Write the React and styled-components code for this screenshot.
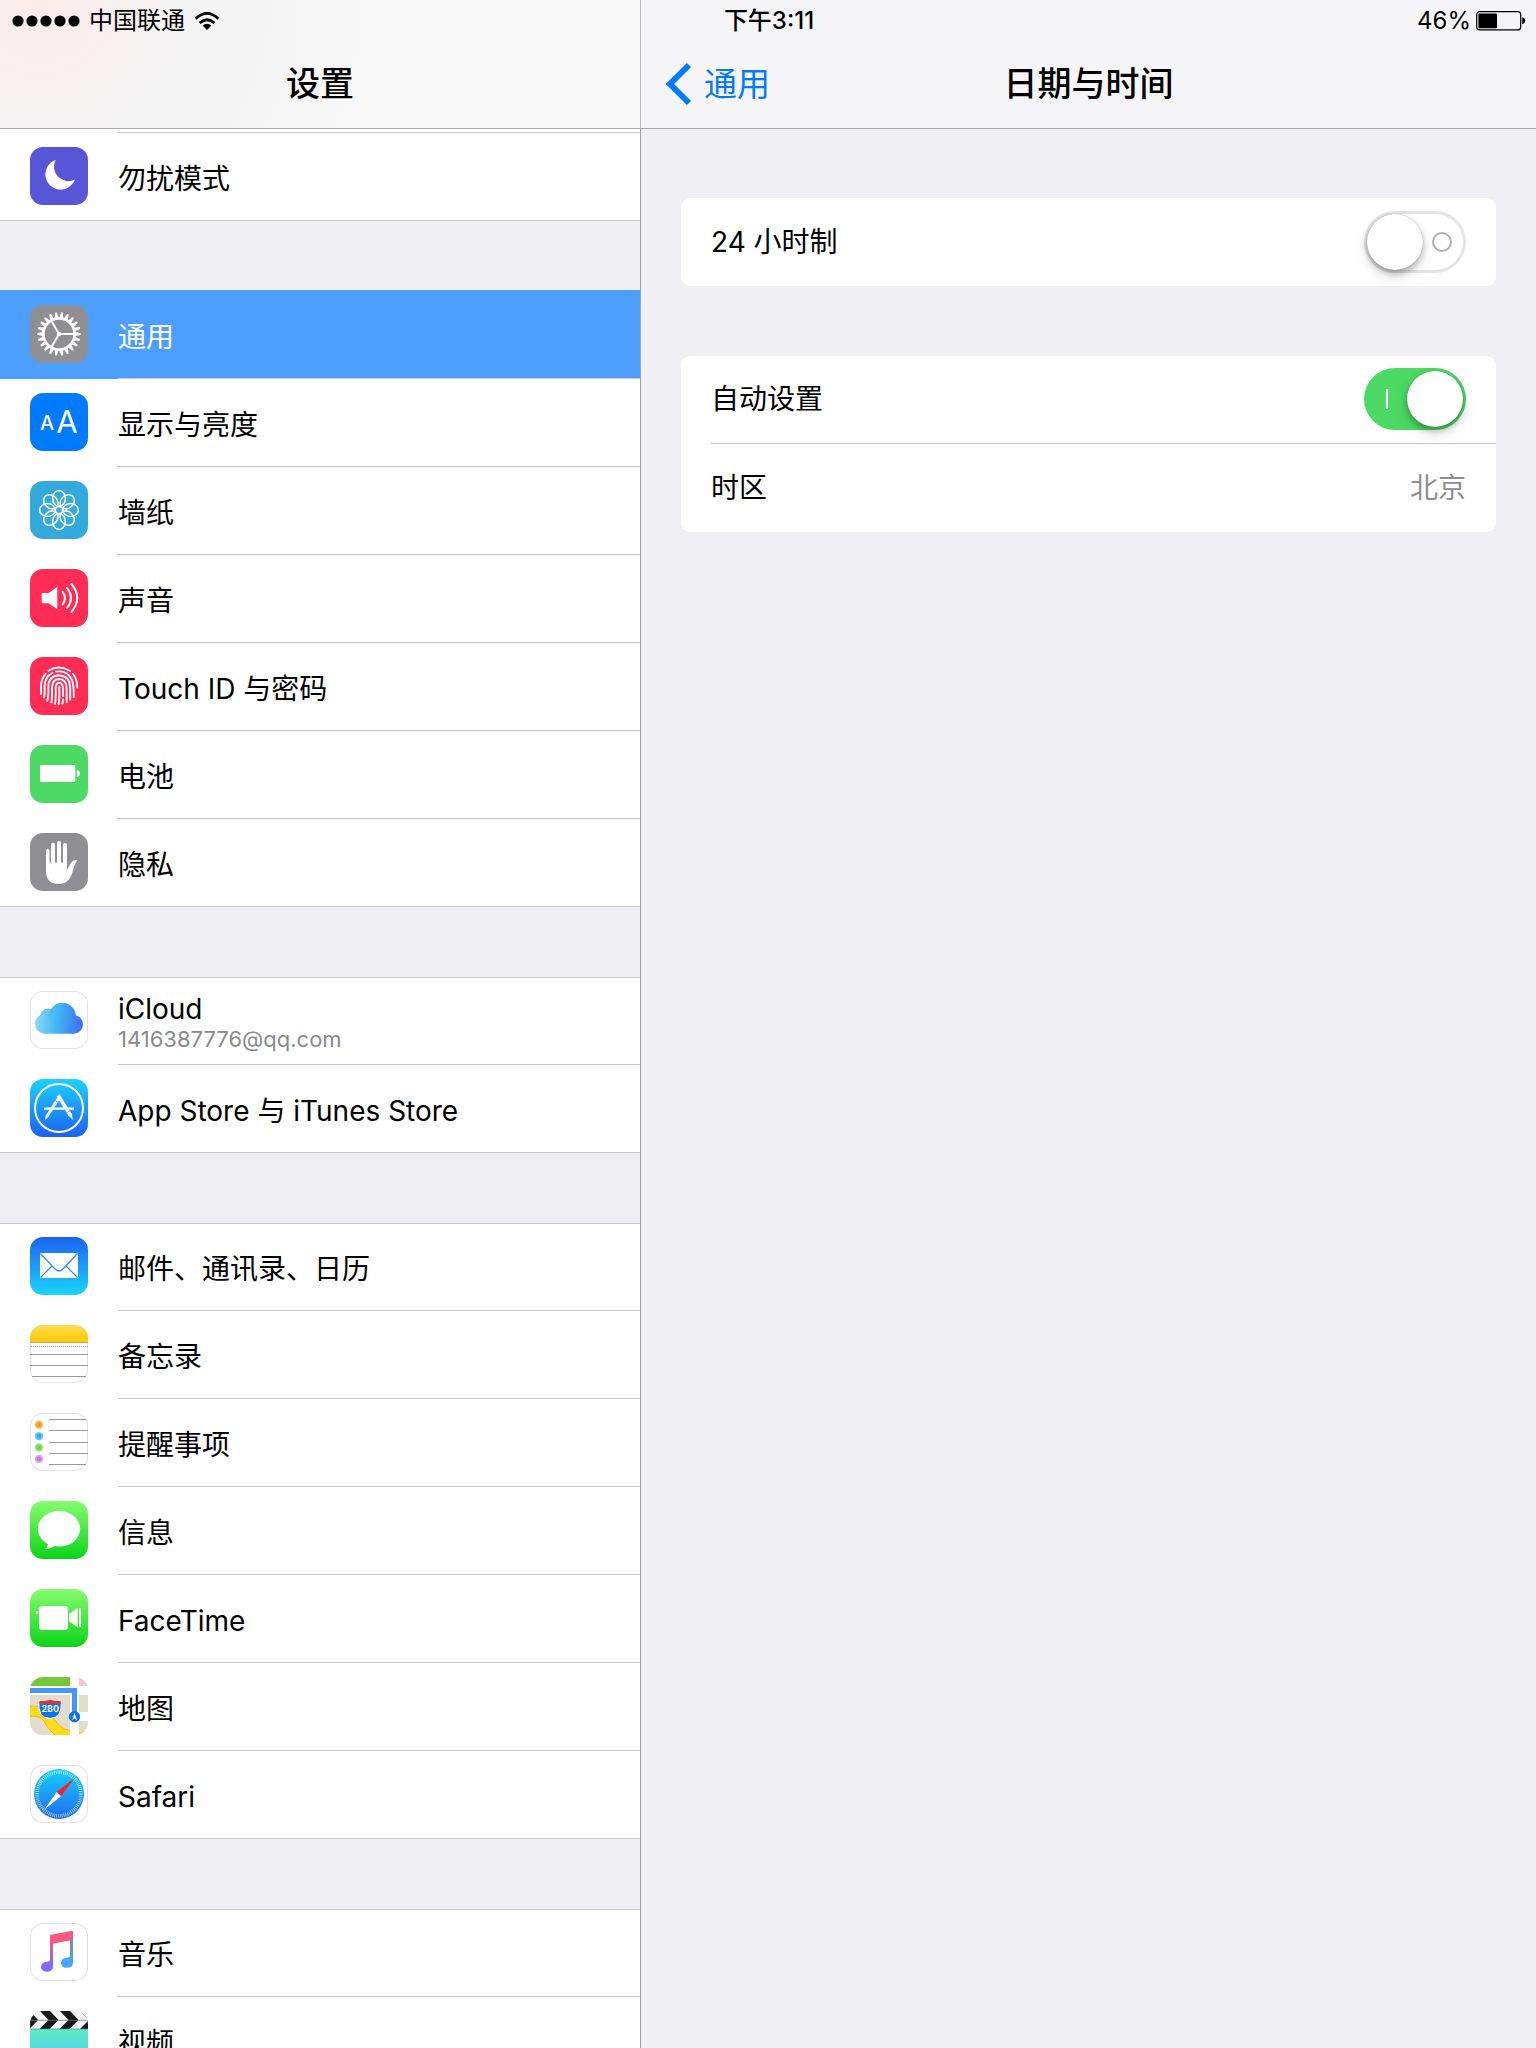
import React, { useState } from "react";
import styled, { createGlobalStyle, css } from "styled-components";

const GlobalStyle = createGlobalStyle`
    *, *::before, *::after{
        box-sizing: border-box;
    }
    body{
        margin: 0;
        background: #efeff4;
        color: #000;
        font-family: Inter, "Noto Sans CJK SC", sans-serif;
    }
    ul{
        list-style: none;
        margin: 0;
        padding: 0;
    }
    a{
        text-decoration: none;
        color: inherit;
    }
`

const Page = styled.div`
    display: grid;
    grid-template-columns: minmax(0, 5fr) minmax(0, 7fr);
    grid-template-rows: auto minmax(0, 1fr);
    height: 100vh;
`

// shares the first grid row with the two nav bars
const StatusBar = styled.div`
    grid-row: 1;
    grid-column: 1 / 3;
    align-self: start;
    z-index: 1;
    display: grid;
    grid-template-columns: 1fr auto 1fr;
    align-items: center;
    height: 42px;
    padding: 0 10px 0 12px;
    font-size: 24px;
    line-height: 42px;
`

const StatusGroup = styled.div`
    display: flex;
    align-items: center;
    justify-content: ${(props) => (props.$end ? "flex-end" : "flex-start")};
    gap: ${(props) => (props.$end ? 5 : 9)}px;
`

const Time = styled.div`
    font-weight: 500;
`

const NavBar = styled.header`
    grid-row: 1;
    grid-column: ${(props) => props.$column};
    display: grid;
    grid-template-columns: 1fr auto 1fr;
    align-items: center;
    height: 129px;
    padding: 40px 25px 0;
    border-bottom: 1px solid #a7a7ac;
    background: ${(props) => props.$background};
    ${(props) => props.$divided && css`
        border-left: 1px solid #b9b9bc;
    `}
`

const Title = styled.h1`
    grid-column: 2;
    margin: 0;
    font-size: 34px;
    line-height: 88px;
    font-weight: 500;
`

const BackLink = styled.a`
    grid-column: 1;
    display: flex;
    align-items: center;
    gap: 12px;
    font-size: 33px;
    line-height: 88px;
    color: #007aff;
`

const Sidebar = styled.nav`
    grid-row: 2;
    grid-column: 1;
    overflow-y: auto;
    scrollbar-width: none;
`

const Group = styled.ul`
    margin-bottom: 70px;
    background: #fff;
    & + &{
        box-shadow: inset 0 1px #c8c7cc;
    }
`

const Separator = styled.div`
    height: 4px;
    padding-left: 118px;
    background: #fff;
    &::after{
        content: "";
        display: block;
        height: 4px;
        border-bottom: 1px solid #c8c7cc;
    }
`

const Row = styled.a`
    display: flex;
    height: 88px;
    padding-left: 30px;
    gap: 30px;
    ${(props) => props.$selected && css`
        color: #fff;
        background: #4c9fff;
        box-shadow: 0 -1px #4c9fff;
    `}
    li:last-child > &{
        border-bottom: 1px solid #c8c7cc;
    }
`

const RowText = styled.div`
    flex: 1;
    display: flex;
    flex-direction: column;
    justify-content: center;
    padding-top: ${(props) => (props.$double ? 2 : 4)}px;
    border-bottom: 1px solid #c8c7cc;
    li:last-child &{
        border-bottom: 0;
    }
`

const Label = styled.span`
    font-size: 28px;
    line-height: 34px;
`

const SubLabel = styled.span`
    font-size: 22px;
    line-height: 26px;
    color: #8a8a8a;
`

const Icon = styled.svg`
    flex: none;
    display: block;
    width: 58px;
    height: 58px;
    margin-top: 14px;
    border-radius: 13px;
    background: ${(props) => props.$color || "#fff"};
    ${(props) => props.$outlined && css`
        box-shadow: inset 0 0 0 1px #e2e2e5;
    `}
`

const Detail = styled.main`
    grid-row: 2;
    grid-column: 2;
    display: flex;
    flex-direction: column;
    gap: 70px;
    padding: 69px 40px;
    border-left: 1px solid #a0a0a5;
`

const Card = styled.div`
    padding-left: 30px;
    border-radius: 9px;
    background: #fff;
`

const Setting = styled.div`
    display: flex;
    align-items: center;
    justify-content: space-between;
    height: 88px;
    padding: 0 30px 1px 0;
    font-size: 28px;
    line-height: 34px;
    &:not(:last-child){
        border-bottom: 1px solid #c8c7cc;
    }
`

const Value = styled.span`
    color: #8e8e93;
`

const Switch = styled.input`
    appearance: none;
    display: flex;
    align-items: center;
    justify-content: space-between;
    width: 102px;
    height: 62px;
    margin: 0;
    padding: 0 14px 0 3px;
    border-radius: 31px;
    background: #fff;
    box-shadow: inset 0 0 0 3px #e5e5e5;
    &::before{
        content: "";
        width: 56px;
        height: 56px;
        border-radius: 50%;
        background: #fff;
        box-shadow: 0 4px 6px rgba(0, 0, 0, 0.24), 0 6px 16px rgba(0, 0, 0, 0.12), 0 0 1px rgba(0, 0, 0, 0.4);
    }
    &::after{
        content: "";
        width: 20px;
        height: 20px;
        border: 2px solid #b0b0b0;
        border-radius: 50%;
    }
    &:checked{
        flex-direction: row-reverse;
        padding: 0 3px 0 22px;
        background: #4cd964;
        box-shadow: none;
    }
    &:checked::after{
        width: 2px;
        border: 0;
        border-radius: 0;
        background: #fff;
    }
`

const MoonIcon = () => (
    <Icon viewBox="0 0 58 58" $color="#5856d6">
        <path fill="#fff" d="M25.7 12.8A15.3 15.3 0 1 0 45 32.6A14.5 14.5 0 0 1 25.7 12.8Z" />
    </Icon>
)

const GearIcon = () => (
    <Icon viewBox="0 0 58 58" $color="#8e8e93">
        <g transform="translate(29 29)">
            <circle r="15.6" fill="none" stroke="#fff" strokeWidth="2.6" />
            {Array.from({ length: 22 }, (_, i) => (
                <path key={i} fill="#fff" transform={`rotate(${(i * 360) / 22})`} d="M16 -1.9L21.4 -1Q22.4 0 21.4 1L16 1.9Z" />
            ))}
            {[0, 120, 240].map((deg) => (
                <path key={deg} stroke="#fff" strokeWidth="2" transform={`rotate(${deg})`} d="M0 0H15" />
            ))}
            <circle r="2.2" fill="#fff" />
        </g>
    </Icon>
)

const DisplayIcon = () => (
    <Icon viewBox="0 0 58 58" $color="#007aff">
        <g fill="#fff" textAnchor="middle" fontFamily="Inter, sans-serif">
            <text x="17" y="37" fontSize="20" fontWeight="500">A</text>
            <text x="37" y="40" fontSize="31">A</text>
        </g>
    </Icon>
)

const WallpaperIcon = () => (
    <Icon viewBox="0 0 58 58" $color="#34aadc">
        <g transform="translate(29 29)" fill="none" stroke="#fff" strokeWidth="1.5">
            <circle r="3.6" />
            {[0, 45, 90, 135, 180, 225, 270, 315].map((deg) => (
                <ellipse key={deg} transform={`rotate(${deg})`} cy="-11.6" rx="6.4" ry="7.8" />
            ))}
        </g>
    </Icon>
)

const SoundIcon = () => (
    <Icon viewBox="0 0 58 58" $color="#ff2d55">
        <path fill="#fff" d="M11.7 24H18.5L27.3 17.7V40.3L18.5 34.3H11.7Z" />
        <g fill="none" stroke="#fff" strokeWidth="2" strokeLinecap="round">
            <path d="M32.6 22.8Q37.4 29 32.6 35.4" />
            <path d="M37 19Q45 29 37 39" />
            <path d="M41.5 15Q53 29 41.5 43" />
        </g>
    </Icon>
)

const TouchIcon = () => (
    <Icon viewBox="0 0 58 58" $color="#ff2d55">
        <g fill="none" stroke="#fff" strokeWidth="1.9" strokeLinecap="round">
            <path d="M18.5 13.8Q29 7.2 40 14" />
            <path d="M11 37V29.5Q11.2 22 15.5 16.8" />
            <path d="M43 17Q47.2 22 47.3 30.5" />
            <path d="M14 40.5Q14.8 38 14.6 32V29Q15 19.5 22.5 16" />
            <path d="M26 14.6Q37 13 41.5 22Q44 27 43.8 40" />
            <path d="M17.2 44Q18.6 40 18.3 30Q18.4 19 29 18.3Q40 19 40.2 31V42.5" />
            <path d="M21.4 45.5Q22.3 40 22 30.5Q22.3 22.3 29 22Q36.4 22.3 36.6 31L36.7 45" />
            <path d="M25 47Q26 41 25.7 31Q26 26 29.2 25.8Q32.6 26 32.9 31Q33.2 34 33 39" />
            <path d="M29.3 30Q29.8 40 28.7 47.2" />
            <path d="M33 42.5L32.5 46.6" />
        </g>
    </Icon>
)

const BatteryIcon = () => (
    <Icon viewBox="0 0 58 58" $color="#4cd964">
        <rect x="10" y="20" width="35.3" height="17" rx="1" fill="#fff" />
        <path fill="#fff" d="M46.8 25Q50 25.5 50 28.5Q50 31.5 46.8 32Z" />
    </Icon>
)

const HandIcon = () => (
    <Icon viewBox="0 0 58 58" $color="#8e8e93">
        <g fill="#fff">
            <rect x="16" y="16" width="3.6" height="24" rx="1.8" />
            <rect x="21" y="9.8" width="4" height="24" rx="2" />
            <rect x="27" y="8" width="4" height="26" rx="2" />
            <rect x="33" y="10" width="4" height="26" rx="2" />
            <path d="M16 29.5H37V36.5L41 29.8Q43.5 26.4 47.4 27.2Q45 30 43 37Q40 51 29 51Q16 51 16 38Z" />
        </g>
    </Icon>
)

const CloudIcon = () => (
    <Icon viewBox="0 0 58 58" $outlined>
        <defs>
            <linearGradient id="cloud" gradientUnits="userSpaceOnUse" x1="5" y1="30" x2="53" y2="34">
                <stop offset="0" stopColor="#8fd8f3" />
                <stop offset="0.45" stopColor="#41b7f6" />
                <stop offset="1" stopColor="#3c6df0" />
            </linearGradient>
        </defs>
        <g fill="url(#cloud)">
            <circle cx="18" cy="25" r="7.3" />
            <circle cx="15" cy="32.7" r="10" />
            <circle cx="32.3" cy="25.2" r="13.5" />
            <circle cx="43.7" cy="33.4" r="9.3" />
            <rect x="15" y="26" width="28.7" height="16.7" />
        </g>
        <path fill="none" stroke="#2aa9dc" strokeOpacity="0.5" strokeWidth="0.8" d="M11 24.5A7.3 7.3 0 0 1 23 19.8Q20 22 19.3 26" />
    </Icon>
)

const AppStoreIcon = () => (
    <Icon viewBox="0 0 58 58" $color="linear-gradient(#1ad3fd, #1d60f0)">
        <circle cx="29" cy="29" r="24" fill="none" stroke="#fff" strokeWidth="2" />
        <g stroke="#fff" fill="#fff">
            <path strokeWidth="2.2" d="M14 29.7H44" />
            <path strokeWidth="3.6" d="M28.2 16.5L40.5 36.5" />
            <path strokeWidth="3.2" d="M28.4 19.5L17.5 36.5" />
            <path stroke="none" d="M38 36L41.6 34L43 41ZM16 35L19 37.2L15 41Z" />
            <circle cx="29.2" cy="16.8" r="1.2" strokeWidth="0" />
        </g>
        <path stroke="#1f94f8" strokeWidth="0.8" d="M24.8 21.3L28 23.5M36.2 34L40 31.8" />
    </Icon>
)

const MailIcon = () => (
    <Icon viewBox="0 0 58 58" $color="linear-gradient(#1d62f0, #1ad5fd)">
        <rect x="10" y="16" width="38" height="25" rx="1" fill="#fff" />
        <g fill="none" stroke="#2a8df5" strokeWidth="1.2">
            <path d="M10.5 16.5L25 32Q29 36 33 32L47.5 16.5" />
            <path d="M10.5 40.5L22 29M47.5 40.5L36 29" />
        </g>
    </Icon>
)

const NotesIcon = () => (
    <Icon viewBox="0 0 58 58" $outlined>
        <defs>
            <linearGradient id="notes" x1="0" y1="0" x2="0" y2="1">
                <stop offset="0" stopColor="#ffdc50" />
                <stop offset="1" stopColor="#fdc802" />
            </linearGradient>
        </defs>
        <rect width="58" height="18" fill="url(#notes)" />
        <path stroke="#c9a94a" strokeWidth="1" d="M0 17.5H58" />
        <path stroke="#999" strokeWidth="1" strokeDasharray="1 1" d="M1 21.5H58" />
        <path stroke="#9b9b9b" strokeWidth="1" d="M0 29.5H58M0 40.5H58M2 51.5H56" />
    </Icon>
)

const RemindersIcon = () => (
    <Icon viewBox="0 0 58 58" $outlined>
        <path stroke="#9b9b9b" strokeWidth="1" d="M19 6.5H56M19 17.5H58M19 29.5H58M19 40.5H58M19 51.5H56" />
        {["#ff9500", "#1badf8", "#63da38", "#cc73e1"].map((color, i) => (
            <g key={color} fill={color}>
                <circle cx="9" cy={11.7 + i * 11.4} r="4.2" opacity="0.65" />
                <circle cx="9" cy={11.7 + i * 11.4} r="2.4" />
            </g>
        ))}
    </Icon>
)

const MessagesIcon = () => (
    <Icon viewBox="0 0 58 58" $color="linear-gradient(#87fc70, #0bd318)">
        <ellipse cx="29" cy="27.8" rx="21.2" ry="17.8" fill="#fff" />
        <path fill="#fff" d="M18 41Q18.5 45.5 15 48Q21.5 48 25 44Z" />
    </Icon>
)

const FaceTimeIcon = () => (
    <Icon viewBox="0 0 58 58" $color="linear-gradient(#87fc70, #0bd318)">
        <g fill="#fff">
            <rect x="9" y="17" width="29" height="24" rx="3" />
            <path d="M39 25L47.7 18.7V38.3L39 32.3Z" />
            <rect x="49" y="19" width="2" height="19" />
            <rect x="6" y="22" width="1.6" height="3" />
        </g>
    </Icon>
)

const MapsIcon = () => (
    <Icon viewBox="0 0 58 58">
        <rect width="40" height="9" fill="#76c73a" />
        <rect x="49" width="9" height="9" fill="#f8c5d3" />
        <rect y="18" width="40" height="40" fill="#e3dcca" />
        <rect x="49" y="18" width="9" height="17" fill="#e3dcca" />
        <rect x="49" y="44" width="9" height="14" fill="#e3dcca" />
        <path fill="#ffdb14" stroke="#f0a723" strokeWidth="0.8" d="M-1 29Q12 28 21 36Q28 52 41 54V59H26Q17 52 14 44Q10 38 -1 39.5Z" />
        <rect x="40" y="16" width="9" height="42" fill="#fff" />
        <path fill="#ffdb14" d="M49 55L58 53V58H49Z" />
        <path fill="none" stroke="#4297f7" strokeWidth="5" d="M0 13.5H44.5V36" />
        <path fill="#0f72ee" stroke="#fff" strokeWidth="1" d="M9 23.3H31Q33 41 20 41.5Q7 41 9 23.3Z" />
        <path fill="#d8343f" d="M9.5 24Q15 24.5 20 22.8Q25 24.5 30.6 24V27H9.5Z" />
        <text x="20.2" y="35" fill="#fff" fontSize="9" fontWeight="700" textAnchor="middle" fontFamily="Inter, sans-serif">280</text>
        <circle cx="44.5" cy="39.8" r="5.7" fill="#0f72ee" />
        <path fill="#fff" d="M44.5 36L47 43.3L44.5 41.6L42 43.3Z" />
    </Icon>
)

const SafariIcon = () => (
    <Icon viewBox="0 0 58 58" $outlined>
        <defs>
            <linearGradient id="safari" x1="0" y1="0" x2="0" y2="1">
                <stop offset="0" stopColor="#1ad0fb" />
                <stop offset="1" stopColor="#1e6cf1" />
            </linearGradient>
        </defs>
        <circle cx="29" cy="29" r="25" fill="url(#safari)" />
        <circle cx="29" cy="29" r="21.8" fill="none" stroke="#fff" strokeWidth="3.4" strokeOpacity="0.75" strokeDasharray="0.7 1.2" />
        <path fill="#fc1f1f" d="M44.5 13L26.8 27L31 31.3Z" />
        <path fill="#fff" d="M14 45L26.8 27L31 31.3Z" />
    </Icon>
)

const MusicIcon = () => (
    <Icon viewBox="0 0 58 58" $outlined>
        <defs>
            <linearGradient id="music" gradientUnits="userSpaceOnUse" x1="28" y1="8" x2="28" y2="48">
                <stop offset="0" stopColor="#fb5c74" />
                <stop offset="0.3" stopColor="#f3598a" />
                <stop offset="0.75" stopColor="#8c67f8" />
                <stop offset="1" stopColor="#8565fb" />
            </linearGradient>
            <linearGradient id="musicRight" gradientUnits="userSpaceOnUse" x1="40" y1="12" x2="40" y2="42">
                <stop offset="0" stopColor="#e0608c" />
                <stop offset="0.4" stopColor="#7d86cf" />
                <stop offset="0.8" stopColor="#45a5f6" />
            </linearGradient>
        </defs>
        <path fill="url(#music)" d="M20 12.6Q20 12 21 11.8L42 7.8Q43 7.7 43 8.7V16.8L23 20.8V43Q23 48.8 16.5 48.8Q11 48.5 11 43.8Q11.2 39 17 38.7Q20 38.6 20 37Z" />
        <path fill="url(#musicRight)" d="M40 12H43V39.3Q43 44.8 36.7 44.8Q31 44.5 31 40Q31.2 35.2 37 34.8Q40 34.6 40 33Z" />
    </Icon>
)

const VideosIcon = () => (
    <Icon viewBox="0 0 58 58" $color="linear-gradient(#5fe8c4 30%, #54d8e4 70%, #5ac8fa)">
        <rect width="58" height="18" fill="#f4f4f4" />
        <g fill="#191919">
            <path d="M0 0L8 9H0Z M0 9H8L0 17.5Z" />
            <path d="M10 0H20L28.5 9L19.5 18H9.5L18.5 9Z" />
            <path d="M30 0H40L48.5 9L39.5 18H29.5L38.5 9Z" />
            <path d="M50 18L58 10V18Z" />
        </g>
        <path stroke="#777" strokeWidth="0.7" d="M0 9.3H58M50 0L58 8" />
        <path stroke="#4e8f88" strokeWidth="0.7" d="M0 18H58" />
    </Icon>
)

const SignalDots = () => (
    <svg width="68" height="12" viewBox="0 0 68 12">
        {[6, 20, 34, 48, 62].map((x) => (
            <circle key={x} cx={x} cy="6" r="5.6" />
        ))}
    </svg>
)

const WifiIcon = () => (
    <svg width="26" height="20" viewBox="0 0 26 20">
        <g fill="none" stroke="#000" strokeWidth="2.8">
            <path d="M1.6 7.6Q13 -2.8 24.4 7.6" />
            <path d="M5.6 12Q13 5.4 20.4 12" />
        </g>
        <path d="M13 19L8.6 14.6Q13 11 17.4 14.6Z" />
    </svg>
)

const BatteryLevel = () => (
    <svg width="50" height="20" viewBox="0 0 50 20">
        <rect x="0.7" y="0.7" width="44" height="18.2" rx="3" fill="none" stroke="#000" strokeWidth="1.2" />
        <rect x="2.4" y="2.4" width="18.6" height="14.8" rx="1" />
        <path d="M46.2 6.3Q49.2 7 49.2 9.8Q49.2 12.6 46.2 13.3Z" />
    </svg>
)

const ChevronIcon = () => (
    <svg width="26" height="44" viewBox="0 0 26 44">
        <path fill="none" stroke="#007aff" strokeWidth="6" d="M23 3L4 22L23 41" />
    </svg>
)

const groups = [
    [{ icon: MoonIcon, label: "勿扰模式" }],
    [
        { icon: GearIcon, label: "通用", selected: true },
        { icon: DisplayIcon, label: "显示与亮度" },
        { icon: WallpaperIcon, label: "墙纸" },
        { icon: SoundIcon, label: "声音" },
        { icon: TouchIcon, label: "Touch ID 与密码" },
        { icon: BatteryIcon, label: "电池" },
        { icon: HandIcon, label: "隐私" },
    ],
    [
        { icon: CloudIcon, label: "iCloud", sub: "1416387776@qq.com" },
        { icon: AppStoreIcon, label: "App Store 与 iTunes Store" },
    ],
    [
        { icon: MailIcon, label: "邮件、通讯录、日历" },
        { icon: NotesIcon, label: "备忘录" },
        { icon: RemindersIcon, label: "提醒事项" },
        { icon: MessagesIcon, label: "信息" },
        { icon: FaceTimeIcon, label: "FaceTime" },
        { icon: MapsIcon, label: "地图" },
        { icon: SafariIcon, label: "Safari" },
    ],
    [
        { icon: MusicIcon, label: "音乐" },
        { icon: VideosIcon, label: "视频" },
    ],
]

const App = () => {
    const [hour24, setHour24] = useState(false);
    const [auto, setAuto] = useState(true);

    return(
        <Page lang="zh-CN">
            <GlobalStyle />
            <NavBar $column={1} $background="radial-gradient(circle at 40px 0, #fdebeb, #f5f3f3 120px, #f4f4f4 200px, #f8f8f8 340px)">
                <Title>设置</Title>
            </NavBar>
            <NavBar $column={2} $background="#f5f5f8" $divided>
                <BackLink href="#general"><ChevronIcon />通用</BackLink>
                <Title>日期与时间</Title>
            </NavBar>
            <StatusBar>
                <StatusGroup>
                    <SignalDots />
                    <span>中国联通</span>
                    <WifiIcon />
                </StatusGroup>
                <Time>下午3:11</Time>
                <StatusGroup $end>
                    <span>46%</span>
                    <BatteryLevel />
                </StatusGroup>
            </StatusBar>
            <Sidebar>
                <Separator />
                {groups.map((rows) => (
                    <Group key={rows[0].label}>
                        {rows.map(({ icon: RowIcon, label, sub, selected }) => (
                            <li key={label}>
                                <Row href="#" $selected={selected}>
                                    <RowIcon />
                                    <RowText $double={!!sub}>
                                        <Label>{label}</Label>
                                        {sub && <SubLabel>{sub}</SubLabel>}
                                    </RowText>
                                </Row>
                            </li>
                        ))}
                    </Group>
                ))}
            </Sidebar>
            <Detail>
                <Card>
                    <Setting>
                        <label htmlFor="hour24">24 小时制</label>
                        <Switch id="hour24" type="checkbox" role="switch" checked={hour24} onChange={() => setHour24(!hour24)} />
                    </Setting>
                </Card>
                <Card>
                    <Setting>
                        <label htmlFor="auto">自动设置</label>
                        <Switch id="auto" type="checkbox" role="switch" checked={auto} onChange={() => setAuto(!auto)} />
                    </Setting>
                    <Setting>
                        <span>时区</span>
                        <Value>北京</Value>
                    </Setting>
                </Card>
            </Detail>
        </Page>
    )
}

export default App;
